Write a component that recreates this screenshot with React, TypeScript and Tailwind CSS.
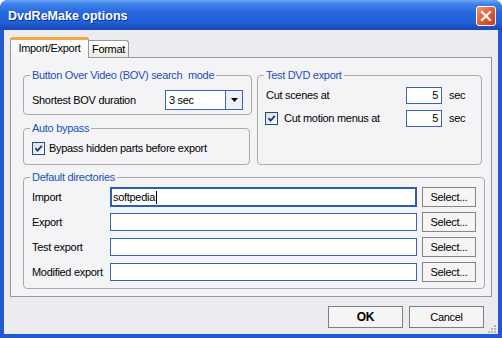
import React from "react";

function Group({
  title,
  className,
  children,
}: {
  title: string;
  className?: string;
  children: React.ReactNode;
}) {
  return (
    <fieldset
      className={`rounded-[4px] border border-[#a9a9ae] px-[8px] ${className ?? ""}`}
    >
      <legend className="-ml-[2px] px-[2px] text-[11px] leading-[13px] text-[#1d4fb4] whitespace-pre">
        {title}
      </legend>
      {children}
    </fieldset>
  );
}

function Check() {
  return (
    <span className="flex h-[13px] w-[13px] shrink-0 items-center justify-center border border-[#1c5180] bg-[linear-gradient(135deg,#dcdcd7,#ffffff)]">
      <svg width="9" height="9" viewBox="0 0 9 9">
        <path d="M1.4 4.2 L3.6 6.6 L7.8 1.8" fill="none" stroke="#1f3a9e" strokeWidth="1.9" />
      </svg>
    </span>
  );
}

function DirRow({ label, value, focus }: { label: string; value?: string; focus?: boolean }) {
  return (
    <div className="flex h-[20px] items-center">
      <span className="w-[78px]">{label}</span>
      {focus ? (
        <div className="flex h-[20px] w-[307px] items-center border-2 border-[#2f5cb3] bg-white pl-[1px]">
          <span>{value}</span>
          <span className="ml-[1px] h-[13px] w-px bg-black" />
        </div>
      ) : (
        <div className="h-[18px] w-[307px] border border-[#3b64b4] bg-white" />
      )}
      <button className="ml-[5px] flex h-[20px] w-[54px] items-center justify-center border border-[#858585] bg-[#f5f5f6]">
        Select...
      </button>
    </div>
  );
}

export default function App() {
  return (
    <div className="flex h-[338px] w-[502px] flex-col overflow-hidden rounded-t-[8px] bg-[#2457d2] font-['Liberation_Sans',Arial,sans-serif] text-[11px] tracking-[-0.3px] text-black">
      {/* title bar */}
      <div className="flex h-[30px] shrink-0 items-center justify-between bg-[linear-gradient(to_bottom,#6ea6f4_0%,#3c81ea_14%,#2868de_42%,#2262d9_72%,#1a47b6_100%)] pl-[8px] pr-[6px] pt-[2px]">
        <span className="text-[12.5px] font-bold tracking-normal text-white [text-shadow:1px_1px_0_#0d2c8c]">
          DvdReMake options
        </span>
        <button className="flex h-[20px] w-[20px] items-center justify-center rounded-[3px] border border-white bg-[linear-gradient(135deg,#f39574,#dc5a33_55%,#bd3c18)]">
          <svg width="12" height="12" viewBox="0 0 12 12">
            <path d="M2 2 L10 10 M10 2 L2 10" stroke="white" strokeWidth="2.2" strokeLinecap="square" />
          </svg>
        </button>
      </div>

      {/* client area */}
      <div className="mx-[4px] mb-[4px] flex flex-1 flex-col bg-[#ecebef]">
        <div className="flex flex-col px-[6px] pt-[7px]">
          <div className="flex items-end">
            <div className="relative z-10 -mb-px flex h-[21px] w-[79px] items-center justify-center rounded-t-[3px] border-x border-t-[3px] border-x-[#919b9c] border-t-[#f2a83c] bg-[linear-gradient(to_bottom,#ffffff,#f4f4f7)] pb-[1px]">
              Import/Export
            </div>
            <div className="flex h-[17px] w-[40px] items-center justify-center rounded-tr-[3px] border-r border-t border-[#919b9c] bg-[linear-gradient(to_bottom,#ffffff,#ecebe6)]">
              Format
            </div>
          </div>

          <div className="flex h-[240px] flex-col border border-[#919b9c] bg-[#f4f4f7] pb-[7px] pl-[12px] pr-[9px] pt-[11px]">
            <div className="grid grid-cols-[227px_225px] gap-x-[7px]">
              <div className="flex flex-col">
                <Group title="Button Over Video (BOV) search  mode" className="pb-[4px]">
                  <div className="flex items-center pt-[8px]">
                    <span className="w-[133px]">Shortest BOV duration</span>
                    <div className="flex h-[20px] w-[78px] border border-[#3a63b2] bg-white">
                      <span className="flex flex-1 items-center pl-[3px]">3 sec</span>
                      <span className="flex w-[17px] items-center justify-center border-l border-[#3a63b2] bg-[#eef0f5]">
                        <svg width="7" height="4" viewBox="0 0 7 4">
                          <path d="M0 0 H7 L3.5 4 Z" fill="black" />
                        </svg>
                      </span>
                    </div>
                  </div>
                </Group>
                <Group title="Auto bypass" className="mt-[7px] pb-[9px]">
                  <div className="mt-[7px] flex h-[13px] items-center">
                    <Check />
                    <span className="ml-[4px]">Bypass hidden parts before export</span>
                  </div>
                </Group>
              </div>

              <Group title="Test DVD export">
                <div className="flex flex-col gap-[6px] pt-[5px]">
                  <div className="flex h-[17px] items-center">
                    <span className="w-[140px]">Cut scenes at</span>
                    <div className="flex h-[17px] w-[36px] items-center justify-end border border-[#3b64b4] bg-white pr-[3px]">
                      5
                    </div>
                    <span className="ml-[7px]">sec</span>
                  </div>
                  <div className="flex h-[17px] items-center">
                    <span className="-ml-[1px]">
                      <Check />
                    </span>
                    <span className="ml-[6px] w-[122px]">Cut motion menus at</span>
                    <div className="flex h-[17px] w-[36px] items-center justify-end border border-[#3b64b4] bg-white pr-[3px]">
                      5
                    </div>
                    <span className="ml-[7px]">sec</span>
                  </div>
                </div>
              </Group>
            </div>

            <Group title="Default directories" className="mt-[6px] pb-[6px]">
              <div className="flex flex-col gap-[5px] pt-[3px]">
                <DirRow label="Import" value="softpedia" focus />
                <DirRow label="Export" />
                <DirRow label="Test export" />
                <DirRow label="Modified export" />
              </div>
            </Group>
          </div>
        </div>

        <div className="mt-[9px] flex h-[28px] justify-end">
          <button className="flex h-[22px] w-[75px] items-center justify-center border border-[#7e7e7e] bg-[#f5f5f6] text-[12px] font-bold">
            OK
          </button>
          <button className="ml-[6px] flex h-[22px] w-[75px] items-center justify-center border border-[#7e7e7e] bg-[#f5f5f6]">
            Cancel
          </button>
          <div className="ml-[3px] mr-[1px] flex w-[10px] items-end">
            <svg width="10" height="10" viewBox="0 0 10 10">
              <g fill="#b8b5ad">
                <rect x="7" y="1" width="2" height="2" />
                <rect x="4" y="4" width="2" height="2" />
                <rect x="7" y="4" width="2" height="2" />
                <rect x="1" y="7" width="2" height="2" />
                <rect x="4" y="7" width="2" height="2" />
                <rect x="7" y="7" width="2" height="2" />
              </g>
            </svg>
          </div>
        </div>
      </div>
    </div>
  );
}
